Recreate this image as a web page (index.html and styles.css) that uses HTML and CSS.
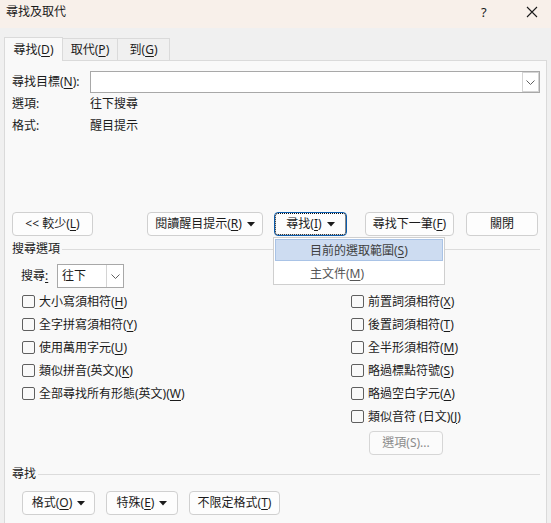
FILE: index.html
```html
<!DOCTYPE html>
<html lang="zh-Hant">
<head>
<meta charset="utf-8">
<title>尋找及取代</title>
<link rel="stylesheet" href="styles.css">
</head>
<body>
<div class="window">
  <header class="titlebar">
    <span class="title">尋找及取代</span>
    <div class="caption-btns">
      <span class="help">?</span>
      <svg class="close" width="12" height="12" viewBox="0 0 12 12"><path d="M1 1 L11 11 M11 1 L1 11" stroke="#1b1b1b" stroke-width="1.1" fill="none"/></svg>
    </div>
  </header>

  <div class="client">
    <nav class="tabs">
      <div class="tab active"><span>尋找(<u>D</u>)</span></div>
      <div class="tab"><span>取代(<u>P</u>)</span></div>
      <div class="tab"><span>到(<u>G</u>)</span></div>
    </nav>

    <section class="panel">
      <div class="find-row">
        <label class="find-label">尋找目標(<u>N</u>):</label>
        <div class="combo">
          <span class="combo-text"></span>
          <span class="combo-btn"><svg width="9" height="5" viewBox="0 0 9 5"><path d="M0.5 0.5 L4.5 4.5 L8.5 0.5" stroke="#606060" fill="none"/></svg></span>
        </div>
      </div>

      <div class="info-row"><span class="info-key">選項:</span><span>往下搜尋</span></div>
      <div class="info-row"><span class="info-key">格式:</span><span>醒目提示</span></div>

      <div class="action-row">
        <button class="btn btn-less"><span>&lt;&lt; 較少(<u>L</u>)</span></button>
        <button class="btn btn-read"><span>閱讀醒目提示(<u>R</u>)</span><svg class="caret" width="8" height="5" viewBox="0 0 8 5"><path d="M0 0 H8 L4 4.5 Z" fill="#1b1b1b"/></svg></button>
        <div class="find-wrap">
          <button class="btn btn-find"><span>尋找(<u>I</u>)</span><svg class="caret" width="8" height="5" viewBox="0 0 8 5"><path d="M0 0 H8 L4 4.5 Z" fill="#1b1b1b"/></svg></button>
          <div class="menu">
            <div class="menu-item selected">目前的選取範圍(<u>S</u>)</div>
            <div class="menu-item">主文件(<u>M</u>)</div>
          </div>
        </div>
        <button class="btn btn-next"><span>尋找下一筆(<u>F</u>)</span></button>
        <button class="btn btn-close"><span>關閉</span></button>
      </div>

      <div class="group-head"><span>搜尋選項</span><span class="rule"></span></div>

      <div class="search-row">
        <label class="search-label">搜尋<u>:</u></label>
        <div class="select">
          <span class="select-text">往下</span>
          <span class="select-btn"><svg width="9" height="5" viewBox="0 0 9 5"><path d="M0.5 0.5 L4.5 4.5 L8.5 0.5" stroke="#606060" fill="none"/></svg></span>
        </div>
      </div>

      <div class="options">
        <div class="opt-col opt-left">
          <div class="check"><span class="box"></span><span>大小寫須相符(<u>H</u>)</span></div>
          <div class="check"><span class="box"></span><span>全字拼寫須相符(<u>Y</u>)</span></div>
          <div class="check"><span class="box"></span><span>使用萬用字元(<u>U</u>)</span></div>
          <div class="check"><span class="box"></span><span>類似拼音(英文)(<u>K</u>)</span></div>
          <div class="check"><span class="box"></span><span>全部尋找所有形態(英文)(<u>W</u>)</span></div>
        </div>
        <div class="opt-col opt-right">
          <div class="check"><span class="box"></span><span>前置詞須相符(<u>X</u>)</span></div>
          <div class="check"><span class="box"></span><span>後置詞須相符(<u>T</u>)</span></div>
          <div class="check"><span class="box"></span><span>全半形須相符(<u>M</u>)</span></div>
          <div class="check"><span class="box"></span><span>略過標點符號(<u>S</u>)</span></div>
          <div class="check"><span class="box"></span><span>略過空白字元(<u>A</u>)</span></div>
          <div class="check"><span class="box"></span><span>類似音符 (日文)(<u>J</u>)</span></div>
          <button class="btn btn-opts" disabled><span>選項(S)...</span></button>
        </div>
      </div>

      <div class="group-head group-find"><span>尋找</span><span class="rule"></span></div>

      <div class="bottom-row">
        <button class="btn btn-format"><span>格式(<u>O</u>)</span><svg class="caret" width="8" height="5" viewBox="0 0 8 5"><path d="M0 0 H8 L4 4.5 Z" fill="#1b1b1b"/></svg></button>
        <button class="btn btn-special"><span>特殊(<u>E</u>)</span><svg class="caret" width="8" height="5" viewBox="0 0 8 5"><path d="M0 0 H8 L4 4.5 Z" fill="#1b1b1b"/></svg></button>
        <button class="btn btn-noformat"><span>不限定格式(<u>T</u>)</span></button>
      </div>
    </section>
  </div>
</div>
</body>
</html>
```

FILE: styles.css
```css
* { box-sizing: border-box; }

html, body {
  margin: 0;
  padding: 0;
}

body {
  width: 551px;
  height: 523px;
  overflow: hidden;
  background: #f0f0f0;
  color: #1b1b1b;
  font-family: "Noto Sans", "Noto Sans CJK TC", sans-serif;
  font-size: 12px;
  line-height: 16px;
}

/* mnemonic letters */
u {
  text-underline-offset: 2px;
}

.window {
  display: flex;
  flex-direction: column;
  height: 523px;
}

/* title bar */
.titlebar {
  height: 28px;
  flex: none;
  display: flex;
  align-items: center;
  justify-content: space-between;
  padding: 0 0 4px 6px;
  background: #f8f0ea;
}

.caption-btns {
  display: flex;
  align-items: center;
}

.help {
  font-size: 13px;
  width: 10px;
  margin-right: 35px;
}

.close {
  margin-right: 13px;
}

/* client area */
.client {
  flex: 1;
  display: flex;
  flex-direction: column;
  padding: 9px 0 0 4px;
}

.tabs {
  display: flex;
  height: 23px;
  align-items: flex-end;
}

.tab {
  height: 22px;
  display: flex;
  align-items: center;
  justify-content: center;
  border: 1px solid #dadada;
  border-bottom: none;
  border-left: none;
  background: #f0f0f0;
}

.tab:nth-child(1) { width: 59px; }
.tab:nth-child(2) { width: 55px; }
.tab:nth-child(3) { width: 52px; }

.tab.active {
  height: 24px;
  border-left: 1px solid #dadada;
  background: #f9f9f9;
  margin-bottom: -1px;
  position: relative;
  z-index: 1;
}

.panel {
  flex: 1;
  width: 543px;
  background: #f9f9f9;
  border: 1px solid #dadada;
  border-bottom: none;
  padding: 0 6px 0 7px;
}

/* find target */
.find-row {
  display: flex;
  align-items: center;
  margin-top: 10px;
  height: 22px;
}

.find-label { width: 78px; }

.combo {
  flex: 1;
  height: 22px;
  display: flex;
  justify-content: flex-end;
  align-items: center;
  background: #fff;
  border: 1px solid #a8a8a8;
}

.combo-btn {
  width: 17px;
  height: 20px;
  display: flex;
  align-items: center;
  justify-content: center;
  border: 1px solid #d4d4d4;
  background: #fff;
}

.info-row {
  display: flex;
  line-height: 22px;
}

.info-key { width: 78px; }

/* command buttons */
.btn {
  font: inherit;
  color: inherit;
  height: 24px;
  padding: 0;
  background: #fdfdfd;
  border: 1px solid #d0d0d0;
  border-radius: 4px;
  display: inline-flex;
  align-items: center;
  justify-content: center;
  gap: 5px;
}

.caret { flex: none; }

.action-row {
  display: flex;
  margin-top: 75px;
}

.btn-less { width: 81px; }
.btn-read { width: 116px; margin-left: 54px; }

.find-wrap {
  position: relative;
  margin-left: 11px;
}

.btn-find {
  width: 73px;
  border: 1px solid #0b5cad;
  outline: 1px dotted #111;
  outline-offset: -2px;
}

.btn-next { width: 89px; margin-left: 18px; }
.btn-close { width: 72px; margin-left: 12px; }

.menu {
  position: absolute;
  left: -1px;
  top: 25px;
  width: 172px;
  height: 48px;
  background: #fff;
  border: 1px solid #cfcfcf;
  padding: 1px;
  z-index: 5;
  color: #555;
}

.menu-item {
  height: 22px;
  line-height: 22px;
  padding-left: 34px;
  border: 1px solid transparent;
}

.menu-item + .menu-item { margin-top: 1px; }

.menu-item.selected {
  background: #cddcf1;
  border-color: #a9c3e6;
  color: #404040;
}

/* group headers */
.group-head {
  display: flex;
  align-items: center;
  line-height: 18px;
  margin-top: 4px;
}

.rule {
  flex: 1;
  height: 1px;
  background: #dcdcdc;
  margin-left: 2px;
}

.group-find {
  margin-top: 10px;
}

/* search direction */
.search-row {
  display: flex;
  align-items: center;
  margin-top: 6px;
  padding-left: 9px;
}

.search-label { width: 36px; }

.select {
  width: 67px;
  height: 24px;
  display: flex;
  align-items: center;
  justify-content: space-between;
  background: #fff;
  border: 1px solid #a8a8a8;
}

.select-text { padding-left: 4px; }

.select-btn {
  width: 17px;
  height: 22px;
  display: flex;
  align-items: center;
  justify-content: center;
  border-left: 1px solid #d4d4d4;
}

/* check boxes */
.options {
  display: flex;
  margin-top: 2px;
  padding-left: 10px;
}

.opt-left { width: 329px; }

.opt-col {
  display: flex;
  flex-direction: column;
}

.check {
  height: 23px;
  display: flex;
  align-items: center;
  gap: 4px;
}

.box {
  width: 13px;
  height: 13px;
  border: 1px solid #5f5f5f;
  border-radius: 2px;
  background: #f9f9f9;
  flex: none;
}

.btn-opts {
  width: 74px;
  margin: 3px 0 0 18px;
  color: #8c8c8c;
  border-color: #d6d6d6;
  background: #fbfbfb;
}

/* bottom buttons */
.bottom-row {
  display: flex;
  gap: 11px;
  margin-top: 8px;
  padding-left: 10px;
}

.btn-format { width: 73px; }
.btn-special { width: 72px; }
.btn-noformat { width: 91px; }
```
